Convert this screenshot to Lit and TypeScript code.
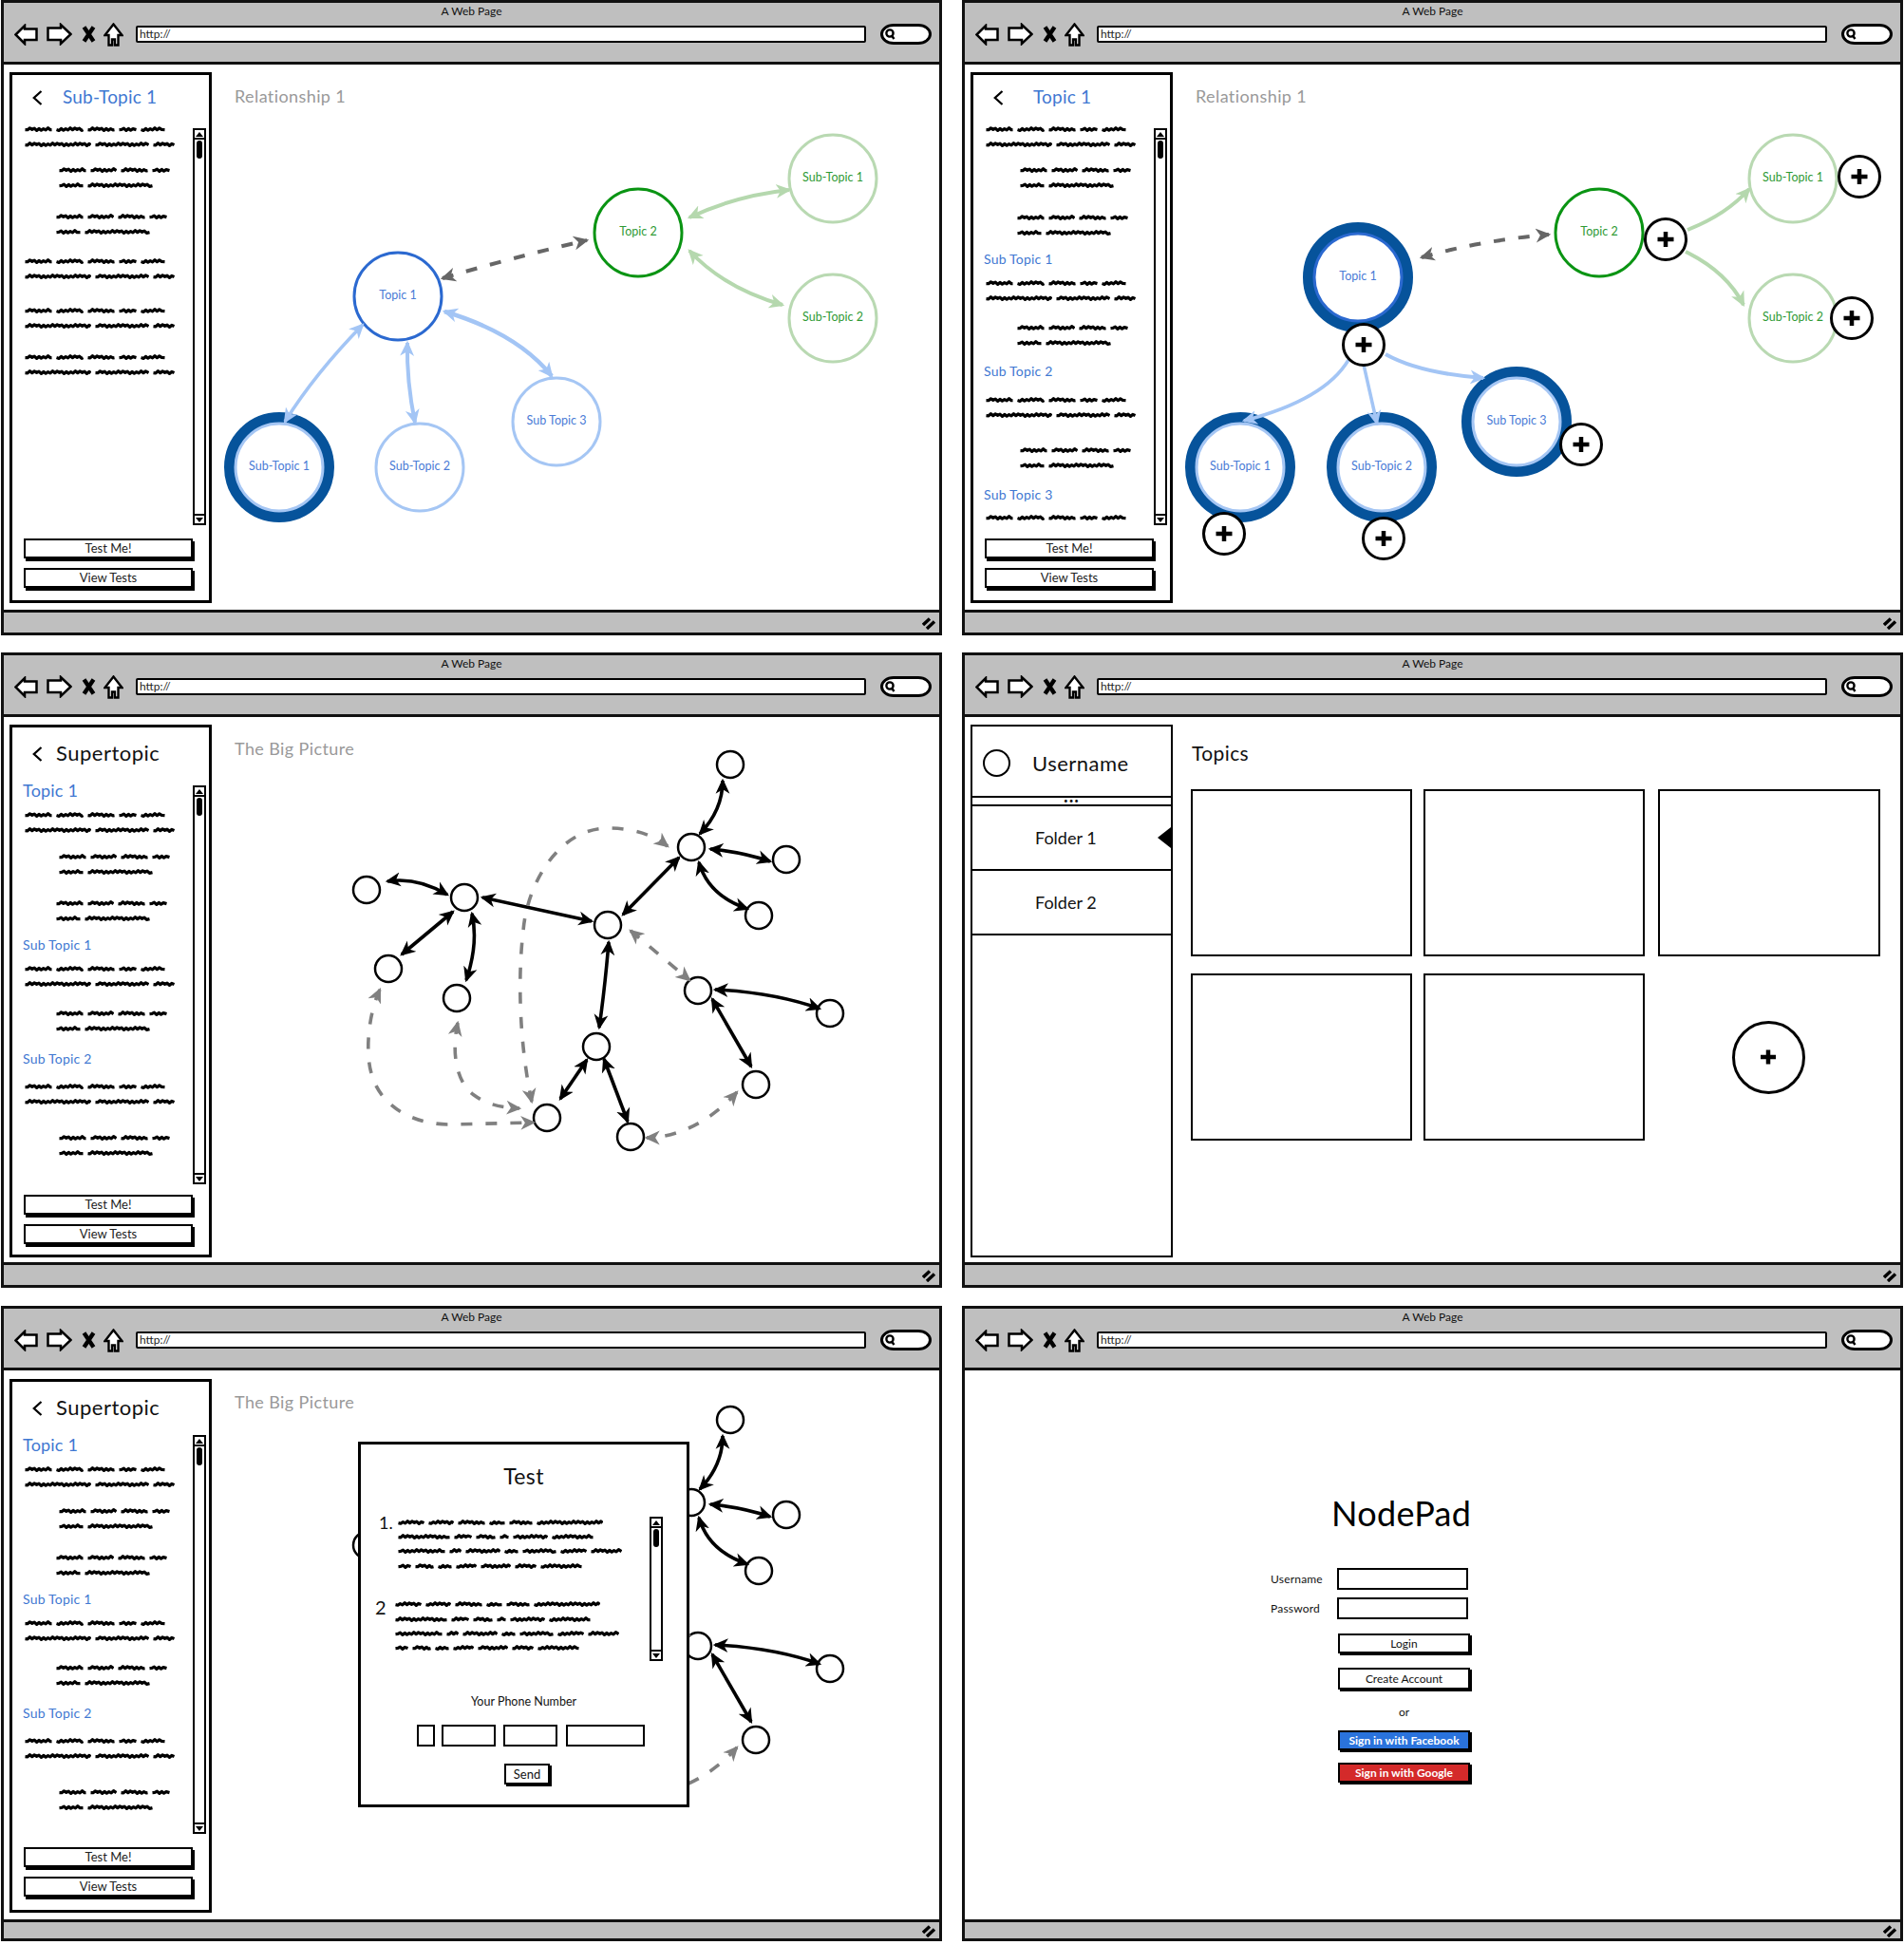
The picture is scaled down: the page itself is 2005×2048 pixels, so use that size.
import { LitElement, html, svg, css } from "lit";
import { customElement, property } from "lit/decorators.js";

// scribbled "greeked" text used all over the wireframes
const FULL = [[29, 29, 29, 19, 26], [70, 57, 23]];
const INDENT = [[29, 28, 29, 19], [26, 69]];
const Q_TEXT = [
  [28, 27, 29, 17, 25, 70],
  [55, 19, 21, 10, 37, 44],
  [50, 13, 37, 15, 36, 28, 33],
  [14, 20, 15, 22, 32, 23, 44],
];

function word(width: number, seed: number) {
  let d = "M0.5 4.6";
  for (let x = 3, i = 0; x < width - 2; x += 2.4, i++) {
    const wob = ((seed * 7 + i * 13) % 5) * 0.25;
    d += ` L${x.toFixed(1)} ${(i % 2 ? 2.6 + wob : 5.4 - wob).toFixed(1)}`;
  }
  d += ` L${width - 0.5} 4.6`;
  return html`<svg class="word" width=${width} height="8" viewBox="0 0 ${width} 8">
    <path d=${d} fill="none" stroke="#000" stroke-width="3.2" stroke-linejoin="round"></path>
  </svg>`;
}

function scribble(lines: number[][]) {
  return lines.map(
    (line, i) => html`<div class="line">${line.map((w, j) => word(w, i + j + w))}</div>`
  );
}

const scribbleStyles = css`
  .line {
    display: flex;
    align-items: center;
    gap: 4px;
    height: 16px;
  }
  .word {
    display: block;
    flex: none;
  }
`;

function plusIcon() {
  return html`<svg width="18" height="18" viewBox="0 0 18 18">
    <path d="M1 9H17M9 1.5V16.5" stroke="#000" stroke-width="4.5" fill="none"></path>
  </svg>`;
}

type Arrow = { d: string; c: string; w?: number; dash?: boolean; one?: boolean };
type GraphNode = { x: number; y: number; t?: string; c?: string; ring?: boolean; r?: number };

const TONES: Record<string, { line: string; text: string }> = {
  topic: { line: "#2b69d0", text: "#4a7bd6" },
  sub: { line: "#a5c6f4", text: "#4a7bd6" },
  green: { line: "#0a9413", text: "#2f9a35" },
  pale: { line: "#b9d9b2", text: "#2f9a35" },
  plain: { line: "#000", text: "#000" },
};
const ARROW_COLORS: Record<string, string> = {
  blue: "#a3c5f5",
  green: "#b5d8ae",
  gray: "#666",
  dash: "#808080",
  black: "#000",
};

@customElement("wire-graph")
class WireGraph extends LitElement {
  @property({ type: Number }) ox = 0;
  @property({ type: Number }) oy = 0;
  @property({ attribute: false }) nodes: GraphNode[] = [];
  @property({ attribute: false }) arrows: Arrow[] = [];
  @property({ attribute: false }) plus: number[][] = [];

  static styles = css`
    :host {
      position: absolute;
      inset: 0;
    }
    svg {
      display: block;
      width: 100%;
      height: 100%;
      overflow: visible;
    }
    text {
      font-family: Lato, "Liberation Sans", sans-serif;
      font-size: 12.5px;
      text-anchor: middle;
      dominant-baseline: middle;
    }
  `;

  render() {
    return html`<svg viewBox="${this.ox + 3} ${this.oy + 68} 985 574" preserveAspectRatio="xMinYMin">
      <defs>
        ${Object.entries(ARROW_COLORS).map(
          ([k, c]) => svg`<marker id="m-${k}" viewBox="0 0 14 14" refX="12" refY="7" markerWidth="16" markerHeight="16"
            markerUnits="userSpaceOnUse" orient="auto-start-reverse">
            <path d="M0 0.5L14 7L0 13.5L4 7Z" fill=${c}></path>
          </marker>`
        )}
      </defs>
      ${this.nodes.map((n) => this.renderNode(n))}
      ${this.arrows.map(
        (a) => svg`<path d=${a.d} fill="none" stroke=${ARROW_COLORS[a.c]} stroke-width=${a.w ?? 3.6}
          stroke-dasharray=${a.dash ? "12 14" : "none"}
          marker-start=${a.one ? "none" : `url(#m-${a.c})`} marker-end="url(#m-${a.c})"></path>`
      )}
      ${this.plus.map(
        ([x, y]) => svg`<circle cx=${x} cy=${y} r="21.5" fill="#fff" stroke="#000" stroke-width="3"></circle>
          <path d="M${x - 8.5} ${y}H${x + 8.5}M${x} ${y - 8}V${y + 8}" stroke="#000" stroke-width="4.5" fill="none"></path>`
      )}
    </svg>`;
  }

  renderNode(n: GraphNode) {
    const tone = TONES[n.c ?? "plain"];
    const r = n.r ?? 46;
    return svg`
      ${n.ring ? svg`<circle cx=${n.x} cy=${n.y} r="52" fill="none" stroke="#06539b" stroke-width="12"></circle>` : ""}
      <circle cx=${n.x} cy=${n.y} r=${r} fill="#fff" stroke=${tone.line} stroke-width=${n.r ? 2.5 : 3}></circle>
      ${n.t ? svg`<text x=${n.x} y=${n.y} fill=${tone.text}>${n.t}</text>` : ""}
    `;
  }
}

@customElement("wire-scrollbar")
class WireScrollbar extends LitElement {
  static styles = css`
    :host {
      display: flex;
      flex-direction: column;
      flex: none;
      box-sizing: border-box;
      width: 14px;
      border: 2px solid #000;
      background: #fff;
    }
    .cap {
      flex: none;
      height: 8px;
      display: flex;
      align-items: center;
      justify-content: center;
    }
    .up {
      border-bottom: 2px solid #000;
    }
    .down {
      border-top: 2px solid #000;
    }
    .up i,
    .down i {
      width: 0;
      height: 0;
      border-left: 4px solid transparent;
      border-right: 4px solid transparent;
    }
    .up i {
      border-bottom: 5px solid #000;
    }
    .down i {
      border-top: 5px solid #000;
    }
    .track {
      flex: 1;
      padding: 1px 2px;
    }
    .thumb {
      height: 19px;
      background: #000;
      border-radius: 3px;
    }
  `;
  render() {
    return html`<div class="cap up"><i></i></div>
      <div class="track"><div class="thumb"></div></div>
      <div class="cap down"><i></i></div>`;
  }
}

type Item =
  | { head: string; big?: boolean; mt: number }
  | { lines: number[][]; left: number; mt: number };

const TEXT_LEFT = 13;
const IND_A = 49;
const IND_B = 46;

const BIG_ITEMS: Item[] = [
  { head: "Topic 1", big: true, mt: 0 },
  { lines: FULL, left: TEXT_LEFT, mt: 8 },
  { lines: INDENT, left: IND_A, mt: 12 },
  { lines: INDENT, left: IND_B, mt: 17 },
  { head: "Sub Topic 1", mt: 11 },
  { lines: FULL, left: TEXT_LEFT, mt: 8 },
  { lines: INDENT, left: IND_B, mt: 15 },
  { head: "Sub Topic 2", mt: 15 },
  { lines: FULL, left: TEXT_LEFT, mt: 12 },
  { lines: INDENT, left: IND_A, mt: 22 },
];

@customElement("wire-sidebar")
class WireSidebar extends LitElement {
  @property() heading = "";
  @property({ type: Number }) titleGap = 21;
  @property({ type: Number }) scrollTop = 7;
  @property({ type: Number }) scrollBottom = 8;
  @property({ attribute: false }) items: Item[] = [];

  static styles = [
    scribbleStyles,
    css`
      :host {
        display: flex;
        flex-direction: column;
        flex: none;
        box-sizing: border-box;
        width: 213px;
        height: 559px;
        margin: 8px 0 0 6px;
        border: 3px solid #000;
        background: #fff;
      }
      :host([tall]) {
        height: 561px;
      }
      :host([low]) {
        height: 562px;
        margin-top: 9px;
      }
      header {
        flex: none;
        display: flex;
        align-items: center;
        box-sizing: border-box;
        height: 49px;
        padding: 0 0 5px 21px;
        font-size: 19px;
        letter-spacing: 0.2px;
        color: #3f78d2;
      }
      :host([tall]) header,
      :host([low]) header {
        height: 56px;
        padding-bottom: 3px;
        font-size: 22px;
        letter-spacing: 0.5px;
        color: #111;
      }
      header svg {
        flex: none;
        margin-top: 3px;
      }
      .body {
        flex: 1;
        min-height: 0;
        display: flex;
        margin: 0 3px 6px 0;
      }
      .text {
        flex: 1;
        min-width: 0;
        overflow: hidden;
      }
      .head {
        height: 18px;
        line-height: 18px;
        margin-left: 11px;
        font-size: 14px;
        letter-spacing: 0.2px;
        color: #3f78d2;
      }
      .head.big {
        height: 20px;
        line-height: 20px;
        font-size: 18px;
      }
      .buttons {
        flex: none;
        display: flex;
        flex-direction: column;
        gap: 10px;
        padding: 0 0 13px 12px;
      }
      :host([tall]) .buttons {
        padding-bottom: 11px;
      }
      :host([low]) .buttons {
        padding-bottom: 14px;
      }
      .btn {
        box-sizing: border-box;
        width: 178px;
        height: 21px;
        line-height: 17px;
        border: 2px solid #000;
        box-shadow: 2px 3px 0 #000;
        background: #fff;
        text-align: center;
        font-size: 13px;
        color: #222;
      }
    `,
  ];

  render() {
    return html`<header>
        <svg width="11" height="16" viewBox="0 0 11 16">
          <path d="M9.5 1L1.8 8L9.5 15" fill="none" stroke="#000" stroke-width="2.3"></path>
        </svg>
        <span style="margin-left:${this.titleGap}px">${this.heading}</span>
      </header>
      <div class="body">
        <div class="text">
          ${this.items.map((it) =>
            "head" in it
              ? html`<div class="head ${it.big ? "big" : ""}" style="margin-top:${it.mt}px">${it.head}</div>`
              : html`<div style="margin:${it.mt}px 0 0 ${it.left}px">${scribble(it.lines)}</div>`
          )}
        </div>
        <wire-scrollbar style="margin:${this.scrollTop}px 0 ${this.scrollBottom}px"></wire-scrollbar>
      </div>
      <div class="buttons">
        <div class="btn">Test Me!</div>
        <div class="btn">View Tests</div>
      </div>`;
  }
}

@customElement("wire-window")
class WireWindow extends LitElement {
  static styles = css`
    :host {
      display: flex;
      flex-direction: column;
      box-sizing: border-box;
      height: 669px;
      border: 3px solid #111;
      background: #fff;
      overflow: hidden;
    }
    .bar {
      flex: none;
      box-sizing: border-box;
      height: 65px;
      background: #bfbfbf;
      border-bottom: 3px solid #111;
    }
    .title {
      height: 20px;
      padding-top: 2px;
      box-sizing: border-box;
      text-align: center;
      font-size: 12px;
      line-height: 14px;
      color: #111;
    }
    .tools {
      display: flex;
      align-items: center;
      height: 26px;
      padding: 0 8px 0 11px;
    }
    .tools svg {
      display: block;
      flex: none;
    }
    .url {
      flex: 1;
      box-sizing: border-box;
      height: 18px;
      margin: 0 15px 0 13px;
      padding-left: 2px;
      border: 2px solid #000;
      border-radius: 2px;
      background: #fff;
      font-size: 12px;
      line-height: 13px;
      color: #222;
    }
    .search {
      box-sizing: border-box;
      flex: none;
      width: 54px;
      height: 22px;
      padding: 2px 0 0 2px;
      border: 3px solid #000;
      border-radius: 14px / 11px;
      background: #fff;
    }
    .content {
      flex: 1;
      min-height: 0;
      position: relative;
      display: flex;
    }
    .status {
      flex: none;
      display: flex;
      align-items: center;
      justify-content: flex-end;
      box-sizing: border-box;
      height: 24px;
      border-top: 3px solid #111;
      background: #bfbfbf;
    }
    :host([low]) .status {
      height: 20px;
    }
  `;
  render() {
    return html`<div class="bar">
        <div class="title">A Web Page</div>
        <div class="tools">
          <svg width="25" height="23" viewBox="0 0 25 23">
            <path d="M1.5 11.5L11 2V5.5H23.5V17H11V21Z" fill="#fff" stroke="#000" stroke-width="2.5"></path>
          </svg>
          <svg style="margin-left:9px" width="27" height="24" viewBox="0 0 27 24">
            <path d="M25.5 12L15 2V5.5H1.5V18H15V22Z" fill="#fff" stroke="#000" stroke-width="2.5"></path>
          </svg>
          <svg style="margin-left:10px" width="15" height="18" viewBox="0 0 15 18">
            <path d="M2.5 1.5L12.5 16.5M12.5 1.5L2.5 16.5" fill="none" stroke="#000" stroke-width="4.4"></path>
          </svg>
          <svg style="margin-left:8px" width="21" height="25" viewBox="0 0 21 25">
            <path d="M10.5 1.5L1.5 13H5.5V23.5H9V17.5H12V23.5H15.5V13H19.5Z" fill="#fff" stroke="#000" stroke-width="2.4"></path>
          </svg>
          <div class="url">http://</div>
          <div class="search">
            <svg width="13" height="13" viewBox="0 0 13 13">
              <circle cx="5" cy="5" r="3.6" fill="none" stroke="#000" stroke-width="2.4"></circle>
              <path d="M7 7.5L9.5 11" stroke="#000" stroke-width="2.4"></path>
            </svg>
          </div>
        </div>
      </div>
      <div class="content"><slot></slot></div>
      <div class="status">
        <svg width="18" height="14" viewBox="0 0 18 14">
          <path d="M1 9L8 2.5M5 13L13 5.5" stroke="#000" stroke-width="3.4" fill="none"></path>
        </svg>
      </div>`;
  }
}

const REL_LEFT_NODES: GraphNode[] = [
  { x: 672, y: 244, t: "Topic 2", c: "green" },
  { x: 419, y: 311, t: "Topic 1", c: "topic" },
  { x: 877, y: 187, t: "Sub-Topic 1", c: "pale" },
  { x: 877, y: 334, t: "Sub-Topic 2", c: "pale" },
  { x: 586, y: 443, t: "Sub Topic 3", c: "sub" },
  { x: 442, y: 491, t: "Sub-Topic 2", c: "sub" },
  { x: 294, y: 491, t: "Sub-Topic 1", c: "sub", ring: true },
];
const REL_LEFT_ARROWS: Arrow[] = [
  { d: "M466 292Q540 270 618 252", c: "gray", w: 4, dash: true },
  { d: "M726 228Q775 205 831 199", c: "green", w: 4 },
  { d: "M726 263Q762 302 824 320", c: "green", w: 4 },
  { d: "M382 341Q332 392 300 443", c: "blue", w: 3.5 },
  { d: "M429 360Q428 400 437 444", c: "blue", w: 4 },
  { d: "M468 327Q545 350 581 395", c: "blue", w: 4.5 },
];

const REL_RIGHT_NODES: GraphNode[] = [
  { x: 1684, y: 244, t: "Topic 2", c: "green" },
  { x: 1888, y: 187, t: "Sub-Topic 1", c: "pale" },
  { x: 1888, y: 334, t: "Sub-Topic 2", c: "pale" },
  { x: 1430, y: 291, t: "Topic 1", c: "topic", ring: true },
  { x: 1306, y: 491, t: "Sub-Topic 1", c: "sub", ring: true },
  { x: 1455, y: 491, t: "Sub-Topic 2", c: "sub", ring: true },
  { x: 1597, y: 443, t: "Sub Topic 3", c: "sub", ring: true },
];
const REL_RIGHT_ARROWS: Arrow[] = [
  { d: "M1497 270Q1560 252 1631 246", c: "gray", w: 4, dash: true },
  { d: "M1777 241Q1818 225 1842 198", c: "green", w: 4, one: true },
  { d: "M1775 264Q1818 285 1836 320", c: "green", w: 4, one: true },
  { d: "M1420 378Q1395 420 1310 442", c: "blue", w: 3.5, one: true },
  { d: "M1436 383L1450 445", c: "blue", w: 3.5, one: true },
  { d: "M1459 372Q1495 392 1562 397", c: "blue", w: 4, one: true },
];
const REL_RIGHT_PLUS = [
  [1958, 185],
  [1950, 334],
  [1754, 251],
  [1436, 362],
  [1289, 561],
  [1457, 566],
  [1665, 467],
];

const BIG_NODES: GraphNode[] = [
  [770, 805], [729, 892], [829, 905], [800, 964], [641, 974], [490, 945], [387, 937],
  [410, 1020], [482, 1051], [736, 1043], [875, 1067], [629, 1102], [577, 1177], [665, 1197], [797, 1142],
].map(([x, y]) => ({ x, y, r: 14 }));
const BIG_ARROWS: Arrow[] = [
  { d: "M762 822Q762 853 738 878", c: "black" },
  { d: "M749 894Q782 897 812 907", c: "black" },
  { d: "M737 908Q747 943 788 957", c: "black" },
  { d: "M716 903L657 963", c: "black" },
  { d: "M509 945L624 970", c: "black" },
  { d: "M642 992Q638 1040 632 1082", c: "black" },
  { d: "M619 1116L591 1157", c: "black" },
  { d: "M637 1115L662 1181", c: "black" },
  { d: "M754 1042Q816 1045 864 1062", c: "black" },
  { d: "M751 1052L792 1123", c: "black" },
  { d: "M409 928Q440 923 472 942", c: "black" },
  { d: "M478 960L424 1005", c: "black" },
  { d: "M498 962Q505 993 492 1032", c: "black" },
  { d: "M561 1160C548 1100 546 1030 552 980C556 930 590 872 641 872C670 872 690 880 704 891", c: "dash", dash: true },
  { d: "M665 980L727 1032", c: "dash", dash: true },
  { d: "M401 1042C388 1070 386 1110 392 1130C402 1168 440 1184 474 1184L563 1182", c: "dash", dash: true },
  { d: "M483 1077C476 1110 482 1140 500 1153C515 1164 530 1166 548 1167", c: "dash", dash: true },
  { d: "M777 1150C750 1180 715 1198 682 1198", c: "dash", dash: true },
];

const LEFT_ITEMS: Item[] = [
  { lines: FULL, left: TEXT_LEFT, mt: 0 },
  { lines: INDENT, left: IND_A, mt: 11 },
  { lines: INDENT, left: IND_B, mt: 17 },
  { lines: FULL, left: TEXT_LEFT, mt: 15 },
  { lines: FULL, left: TEXT_LEFT, mt: 20 },
  { lines: FULL, left: TEXT_LEFT, mt: 17 },
];
const TOPIC_ITEMS: Item[] = [
  { lines: FULL, left: TEXT_LEFT, mt: 0 },
  { lines: INDENT, left: IND_A, mt: 11 },
  { lines: INDENT, left: IND_B, mt: 18 },
  { head: "Sub Topic 1", mt: 11 },
  { lines: FULL, left: TEXT_LEFT, mt: 8 },
  { lines: INDENT, left: IND_B, mt: 15 },
  { head: "Sub Topic 2", mt: 13 },
  { lines: FULL, left: TEXT_LEFT, mt: 13 },
  { lines: INDENT, left: IND_A, mt: 21 },
  { head: "Sub Topic 3", mt: 14 },
  { lines: [FULL[0]], left: TEXT_LEFT, mt: 7 },
];

@customElement("app-root")
export class AppRoot extends LitElement {
  static styles = [
    scribbleStyles,
    css`
      :host {
        display: grid;
        box-sizing: border-box;
        width: 2005px;
        height: 2048px;
        padding: 0 0 0 1px;
        grid-template-columns: 991px 991px;
        grid-template-rows: 669px 670px 669px;
        align-content: start;
        column-gap: 21px;
        row-gap: 18px;
        font-family: Lato, "Liberation Sans", sans-serif;
        color: #111;
      }
      .caption {
        margin: 22px 0 0 24px;
        font-size: 18px;
        letter-spacing: 0.4px;
        line-height: 22px;
        color: #999;
        position: relative;
      }
      .folders {
        flex: none;
        display: flex;
        flex-direction: column;
        box-sizing: border-box;
        width: 213px;
        height: 561px;
        margin: 8px 0 0 6px;
        border: 2px solid #000;
      }
      .who {
        flex: none;
        box-sizing: border-box;
        height: 75px;
        display: flex;
        align-items: center;
        padding: 3px 0 0 11px;
        border-bottom: 2px solid #000;
        font-size: 22px;
        letter-spacing: 0.5px;
      }
      .who i {
        flex: none;
        box-sizing: border-box;
        width: 29px;
        height: 29px;
        margin-right: 23px;
        border: 2px solid #000;
        border-radius: 50%;
      }
      .dots {
        flex: none;
        height: 7px;
        line-height: 6px;
        border-bottom: 2px solid #000;
        text-align: center;
        font-size: 8px;
        letter-spacing: 1px;
      }
      .folder {
        flex: none;
        position: relative;
        box-sizing: border-box;
        height: 68px;
        line-height: 66px;
        padding-left: 66px;
        border-bottom: 2px solid #000;
        font-size: 18px;
      }
      .folder.active::after {
        content: "";
        position: absolute;
        right: 0;
        top: 22px;
        width: 14px;
        height: 22px;
        background: #000;
        clip-path: polygon(0 50%, 100% 0, 100% 100%);
      }
      .topics {
        flex: 1;
        padding-left: 19px;
      }
      .topics h2 {
        margin: 28px 0 0 1px;
        font-size: 21px;
        font-weight: 400;
        letter-spacing: 0.4px;
        line-height: 20px;
      }
      .grid {
        display: grid;
        grid-template-columns: 233px 233px 233px;
        grid-auto-rows: 176px;
        column-gap: 12px;
        row-gap: 18px;
        margin-top: 28px;
      }
      .card {
        border: 2px solid #000;
      }
      .card.third {
        margin: 0 -3px 0 2px;
      }
      .add {
        place-self: center;
        box-sizing: border-box;
        width: 77px;
        height: 77px;
        margin-left: 3px;
        border: 3px solid #000;
        border-radius: 50%;
        display: flex;
        align-items: center;
        justify-content: center;
      }
      .modal {
        position: absolute;
        left: 373px;
        top: 75px;
        box-sizing: border-box;
        width: 349px;
        height: 385px;
        padding-top: 19px;
        border: 3px solid #000;
        background: #fff;
      }
      .modal h3 {
        margin: 0;
        height: 28px;
        line-height: 28px;
        text-align: center;
        font-size: 23px;
        font-weight: 400;
        letter-spacing: 0.4px;
      }
      .quiz {
        display: flex;
        justify-content: space-between;
        height: 154px;
        margin: 27px 25px 0 0;
      }
      .q {
        display: flex;
        font-size: 18px;
      }
      .q .line {
        height: 15.4px;
      }
      .q1 {
        margin-left: 19px;
      }
      .q2 {
        margin: 25px 0 0 15px;
      }
      .num {
        flex: none;
        width: 20px;
        line-height: 16px;
      }
      .q2 .num {
        width: 21px;
        font-size: 20px;
        line-height: 20px;
      }
      .quiz wire-scrollbar {
        margin-top: 2px;
      }
      .phone {
        margin-top: 35px;
        line-height: 16px;
        text-align: center;
        font-size: 12.5px;
      }
      .digits {
        display: flex;
        margin: 16px 0 0 59px;
      }
      .digits div {
        box-sizing: border-box;
        height: 23px;
        border: 2px solid #000;
      }
      .send {
        box-sizing: border-box;
        width: 48px;
        height: 22px;
        margin: 18px 0 0 151px;
        border: 2px solid #000;
        box-shadow: 2px 2px 0 #000;
        text-align: center;
        font-size: 13px;
        line-height: 18px;
      }
      .login {
        padding: 130px 0 0 322px;
      }
      .login h1 {
        margin: 0 0 38px 64px;
        font-size: 36px;
        line-height: 40px;
        font-weight: 400;
        letter-spacing: 0.3px;
        color: #000;
      }
      .row {
        display: grid;
        grid-template-columns: 70px 138px;
        align-items: center;
        height: 23px;
        margin-bottom: 8px;
        font-size: 12px;
        letter-spacing: 0.2px;
      }
      .row div {
        box-sizing: border-box;
        height: 23px;
        border: 2px solid #000;
      }
      .lbtn {
        box-sizing: border-box;
        width: 139px;
        height: 21px;
        margin: 15px 0 0 71px;
        border: 2px solid #000;
        box-shadow: 2px 2px 0 #000;
        text-align: center;
        font-size: 12px;
        line-height: 17px;
      }
      .lbtn.create {
        height: 23px;
        line-height: 19px;
      }
      .lbtn.fb {
        margin-top: 11px;
        background: #2a73dc;
        color: #fff;
        font-weight: 700;
      }
      .lbtn.google {
        margin-top: 13px;
        background: #d42a2a;
        color: #fff;
        font-weight: 700;
      }
      .or {
        width: 139px;
        margin: 16px 0 0 71px;
        line-height: 16px;
        text-align: center;
        font-size: 12px;
      }
    `,
  ];

  render() {
    return html`
      <wire-window>
        <wire-graph .ox=${1} .oy=${-1} .nodes=${REL_LEFT_NODES} .arrows=${REL_LEFT_ARROWS}></wire-graph>
        <wire-sidebar heading="Sub-Topic 1" .items=${LEFT_ITEMS}></wire-sidebar>
        <div class="caption">Relationship 1</div>
      </wire-window>

      <wire-window>
        <wire-graph .ox=${1013} .oy=${-1} .nodes=${REL_RIGHT_NODES} .arrows=${REL_RIGHT_ARROWS} .plus=${REL_RIGHT_PLUS}></wire-graph>
        <wire-sidebar heading="Topic 1" .titleGap=${31} .items=${TOPIC_ITEMS}></wire-sidebar>
        <div class="caption">Relationship 1</div>
      </wire-window>

      <wire-window>
        <wire-graph .ox=${2} .oy=${687} .nodes=${BIG_NODES} .arrows=${BIG_ARROWS}></wire-graph>
        <wire-sidebar tall heading="Supertopic" .titleGap=${14} .scrollTop=${5} .scrollBottom=${5} .items=${BIG_ITEMS}></wire-sidebar>
        <div class="caption">The Big Picture</div>
      </wire-window>

      <wire-window>
        <div class="folders">
          <div class="who"><i></i>Username</div>
          <div class="dots">•••</div>
          <div class="folder active">Folder 1</div>
          <div class="folder">Folder 2</div>
        </div>
        <div class="topics">
          <h2>Topics</h2>
          <div class="grid">
            <div class="card"></div>
            <div class="card"></div>
            <div class="card third"></div>
            <div class="card"></div>
            <div class="card"></div>
            <div class="add">${plusIcon()}</div>
          </div>
        </div>
      </wire-window>

      <wire-window low>
        <wire-graph .ox=${2} .oy=${685} .nodes=${BIG_NODES} .arrows=${BIG_ARROWS}></wire-graph>
        <wire-sidebar low heading="Supertopic" .titleGap=${14} .scrollTop=${0} .scrollBottom=${8} .items=${BIG_ITEMS}></wire-sidebar>
        <div class="caption">The Big Picture</div>
        <div class="modal">
          <h3>Test</h3>
          <div class="quiz">
            <div>
              <div class="q q1"><span class="num">1.</span><div>${scribble(Q_TEXT)}</div></div>
              <div class="q q2"><span class="num">2</span><div>${scribble(Q_TEXT)}</div></div>
            </div>
            <wire-scrollbar></wire-scrollbar>
          </div>
          <div class="phone">Your Phone Number</div>
          <div class="digits">
            <div style="width:19px"></div>
            <div style="width:57px;margin-left:7px"></div>
            <div style="width:57px;margin-left:8px"></div>
            <div style="width:83px;margin-left:9px"></div>
          </div>
          <div class="send">Send</div>
        </div>
      </wire-window>

      <wire-window low>
        <div class="login">
          <h1>NodePad</h1>
          <div class="row"><span>Username</span><div></div></div>
          <div class="row"><span>Password</span><div></div></div>
          <div class="lbtn">Login</div>
          <div class="lbtn create">Create Account</div>
          <div class="or">or</div>
          <div class="lbtn fb">Sign in with Facebook</div>
          <div class="lbtn google">Sign in with Google</div>
        </div>
      </wire-window>
    `;
  }
}
